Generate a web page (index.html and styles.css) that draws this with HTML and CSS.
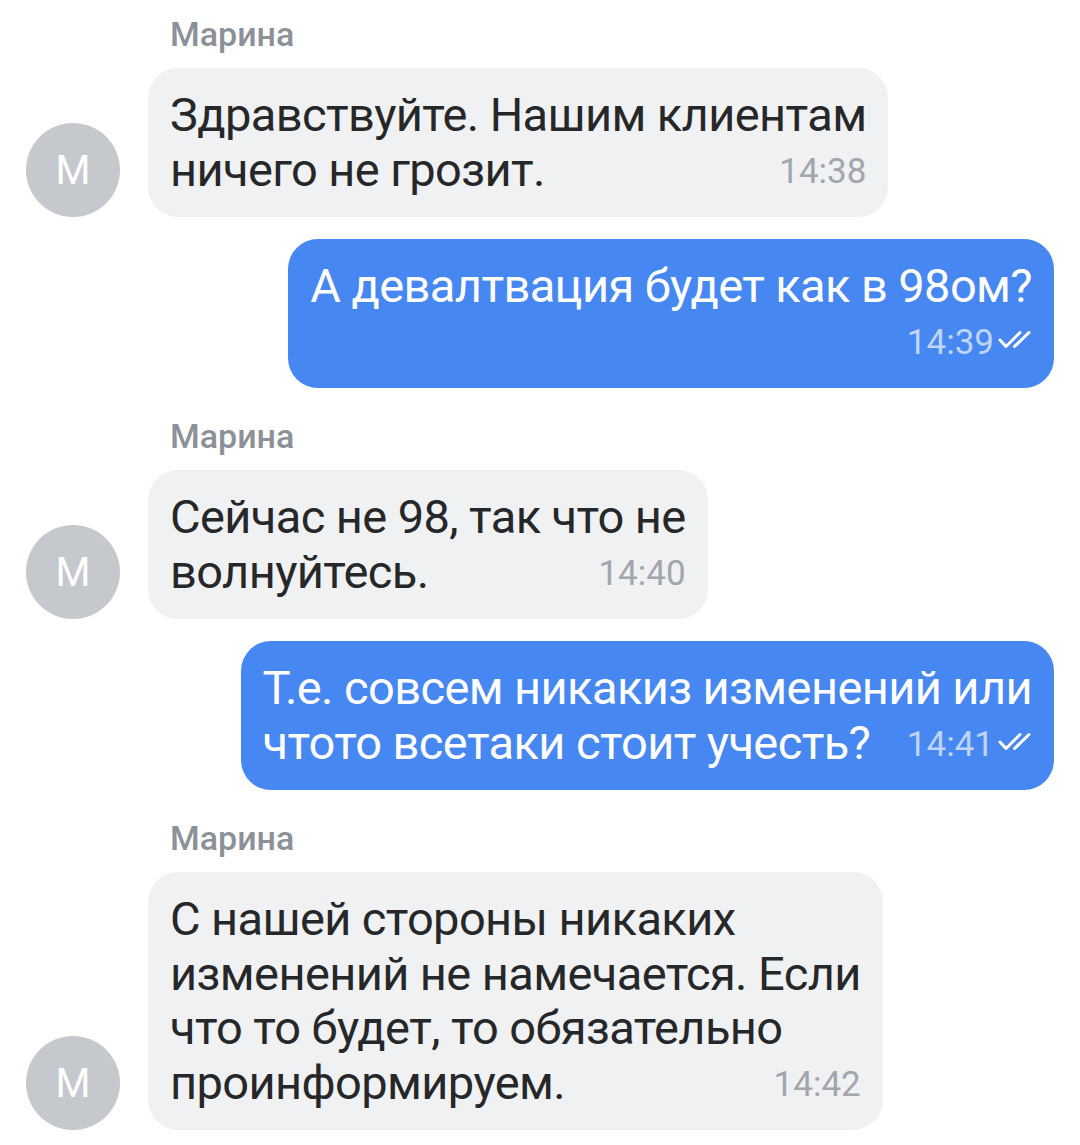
FILE: index.html
```html
<!DOCTYPE html>
<html lang="ru">
<head>
<meta charset="utf-8">
<title>Чат</title>
<link rel="stylesheet" href="styles.css">
</head>
<body>
<div class="chat">
  <div class="group in">
    <div class="name">Марина</div>
    <div class="row">
      <div class="avatar">М</div>
      <div class="bubble">Здравствуйте. Нашим клиентам<br>ничего не грозит.<span class="meta">14:38</span></div>
    </div>
  </div>

  <div class="group out">
    <div class="row">
      <div class="bubble blue">А девалтвация будет как в 98ом?<span class="meta block">14:39<svg class="check" viewBox="0 0 34 20"><path d="M2 10 L8 16.5 L22 2.5 M16.5 16.5 L31 2.5"/></svg></span></div>
    </div>
  </div>

  <div class="group in">
    <div class="name">Марина</div>
    <div class="row">
      <div class="avatar">М</div>
      <div class="bubble">Сейчас не 98, так что не<br>волнуйтесь.<span class="meta">14:40</span></div>
    </div>
  </div>

  <div class="group out">
    <div class="row">
      <div class="bubble blue">Т.е. совсем никакиз изменений или<br>чтото всетаки стоит учесть?<span class="meta">14:41<svg class="check" viewBox="0 0 34 20"><path d="M2 10 L8 16.5 L22 2.5 M16.5 16.5 L31 2.5"/></svg></span></div>
    </div>
  </div>

  <div class="group in">
    <div class="name">Марина</div>
    <div class="row">
      <div class="avatar">М</div>
      <div class="bubble">С нашей стороны никаких<br>изменений не намечается. Если<br>что то будет, то обязательно<br>проинформируем.<span class="meta">14:42</span></div>
    </div>
  </div>
</div>
</body>
</html>
```

FILE: styles.css
```css
html, body {
  margin: 0;
  padding: 0;
  background: #ffffff;
}

.chat {
  font-family: Roboto, "Noto Sans", "Liberation Sans", sans-serif;
  padding: 15px 26px 0 26px;
  display: flex;
  flex-direction: column;
}

.group {
  display: flex;
  flex-direction: column;
}

.group + .group {
  margin-top: 22px;
}

.group.out + .group.in {
  margin-top: 29px;
}

.name {
  font-size: 34px;
  line-height: 38px;
  font-weight: 500;
  color: #8c9098;
  margin-left: 144px;
  margin-bottom: 15px;
}

.row {
  display: flex;
  align-items: flex-end;
}

.out .row {
  justify-content: flex-end;
}

.avatar {
  width: 94px;
  height: 94px;
  border-radius: 50%;
  background: #c5c8cd;
  color: #ffffff;
  font-size: 40px;
  font-weight: 400;
  display: flex;
  align-items: center;
  justify-content: center;
  flex: none;
  margin-right: 28px;
}

.bubble {
  background: #f0f1f3;
  color: #262728;
  font-size: 47px;
  letter-spacing: -0.6px;
  line-height: 54.5px;
  padding: 20px 22px;
  border-radius: 30px;
  width: fit-content;
  display: flow-root;
}

.bubble.blue {
  background: #4687f1;
  color: #ffffff;
}

.meta {
  float: right;
  font-size: 35px;
  letter-spacing: 0;
  line-height: 50.5px;
  padding-top: 4px;
  margin-left: 26px;
  color: #a2a6ac;
  display: flex;
  align-items: center;
}

.blue .meta {
  color: rgba(255, 255, 255, 0.66);
  margin-right: 0;
}

.meta.block {
  float: none;
  justify-content: flex-end;
}

.check {
  width: 34px;
  height: 20px;
  margin-left: 4px;
  margin-top: -6px;
  fill: none;
  stroke: #ffffff;
  stroke-width: 3;
  stroke-linecap: round;
  stroke-linejoin: round;
}
```
